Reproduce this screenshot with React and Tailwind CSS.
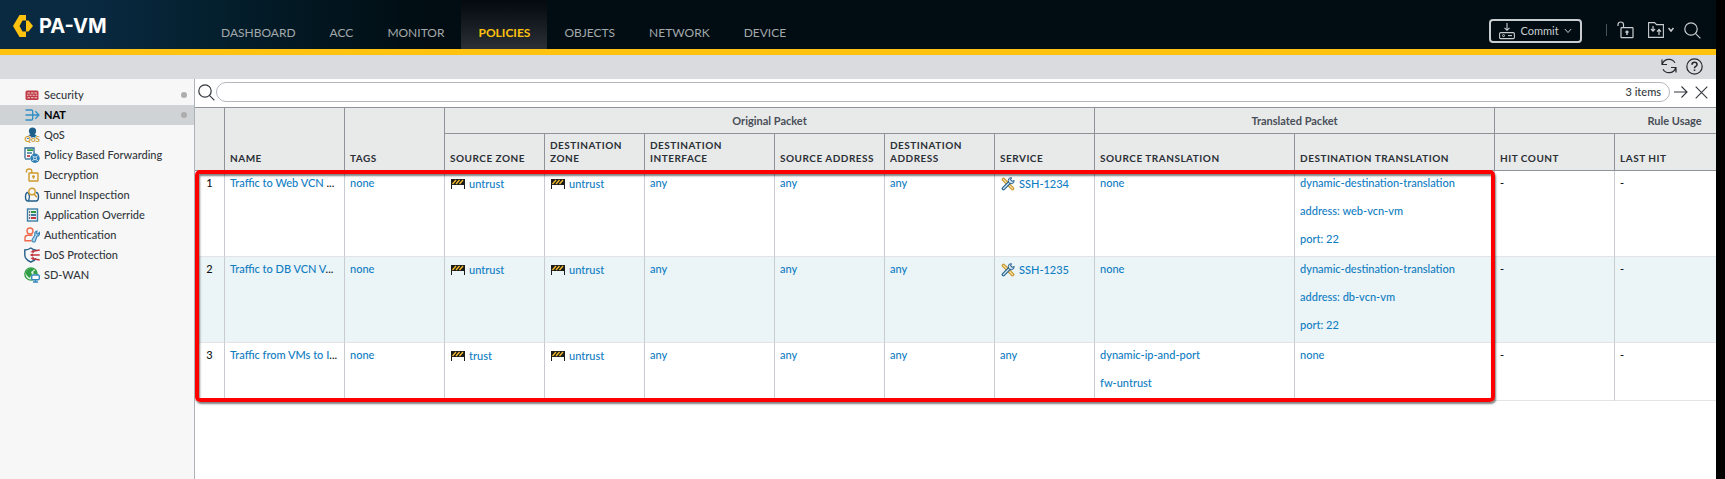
import React from "react";

const NAV = ["DASHBOARD", "ACC", "MONITOR", "POLICIES", "OBJECTS", "NETWORK", "DEVICE"];

function Svg({ w = 16, h = 16, className = "", children }) {
  return (
    <svg width={w} height={h} viewBox={`0 0 ${w} ${h}`} fill="none" className={`shrink-0 ${className}`} aria-hidden="true">
      {children}
    </svg>
  );
}

const SecurityIcon = () => (
  <Svg>
    <rect x="1.500" y="3.500" width="13" height="9.500" rx="1.500" fill="#bf3a44" />
    <path d="M3.500 6h2.500M7 6h2.500M10.500 6h2.500M3 8.300h1.500M5.500 8.300h2M8.700 8.300h2M11.800 8.300h1.500M3.500 10.700h2.500M7 10.700h2.500M10.500 10.700h2.500" stroke="#f3d6d8" strokeWidth="1.100" />
  </Svg>
);
const NatIcon = () => (
  <Svg>
    <path d="M1.500 3h6q1.200 0 1.200 1.200v7.600q0 1.200-1.200 1.200h-6M1.500 8h13M11.300 4.300 15 8l-3.700 3.700" stroke="#2f8fc4" strokeWidth="1.300" />
  </Svg>
);
const QosIcon = () => (
  <Svg>
    <circle cx="8.500" cy="4" r="3.600" fill="#1d5e8a" />
    <path d="M3 12c0-3.500 2-5 5.500-5s5 1.500 5 5z" fill="#1d5e8a" />
    <text x=".5" y="15" fontSize="8" fontWeight="700" fill="#c8992c" stroke="#f7f7f7" strokeWidth="1.500" paintOrder="stroke" fontFamily="Lato, sans-serif">QoS</text>
  </Svg>
);
const PbfIcon = () => (
  <Svg>
    <path d="M1 11.500V1h9v6" fill="#fff" stroke="#2a6a95" strokeWidth="1.300" />
    <path d="M1 12h5" stroke="#2a6a95" strokeWidth="1.300" />
    <path d="M3 3.200H9" stroke="#2d9a3c" strokeWidth="1.800" />
    <path d="M3 6H8" stroke="#2a6a95" strokeWidth="1.400" />
    <path d="M3 9h3" stroke="#c23b43" strokeWidth="1.800" />
    <circle cx="11" cy="11.300" r="4.700" fill="#2f7fb5" />
    <path d="m8.300 8.600 5.400 5.400m0-5.400-5.400 5.400" stroke="#e6f2f9" strokeWidth="1" />
    <circle cx="11" cy="11.300" r="1.500" fill="#2f7fb5" stroke="#e6f2f9" strokeWidth=".8" />
  </Svg>
);
const DecryptIcon = () => (
  <Svg>
    <rect x="5" y="6" width="9" height="8" rx=".5" stroke="#cf9a2b" strokeWidth="1.400" />
    <path d="M7.800 6V4q0-2-2.600-2T2.500 4v1.500" stroke="#cf9a2b" strokeWidth="1.400" />
    <path d="M9.500 8.200v3.600M8 9.500h3" stroke="#cf9a2b" strokeWidth="1.400" />
  </Svg>
);
const TunnelIcon = () => (
  <Svg>
    <path d="M4 5.500Q1.500 5.500 1.500 9.700T4 14h8q2.500 0 2.500-4.300T12 5.500" stroke="#245f8b" strokeWidth="1.400" />
    <path d="M4.500 5.800q1.800 4 0 8" stroke="#245f8b" strokeWidth="1.200" />
    <circle cx="8" cy="4.500" r="3.200" stroke="#cf9a2b" strokeWidth="1.400" />
    <path d="m10 7 2.800 3.200" stroke="#cf9a2b" strokeWidth="1.500" />
  </Svg>
);
const AppIcon = () => (
  <Svg>
    <rect x="3.500" y="2" width="10" height="12" fill="#e9f1f6" stroke="#3f7ea6" strokeWidth="1.400" />
    <path d="M7 5h5" stroke="#2d9a3c" strokeWidth="2" />
    <path d="M7 8h5" stroke="#2a6a95" strokeWidth="1.800" />
    <path d="M7 11h5" stroke="#c23b43" strokeWidth="2" />
    <path d="M5 5h1.200M5 8h1.200M5 11h1.200" stroke="#444" strokeWidth="1.500" />
  </Svg>
);
const AuthIcon = () => (
  <Svg>
    <circle cx="6" cy="4" r="3" stroke="#f0694a" strokeWidth="1.400" />
    <path d="M8.500 8.300H4Q1 8.300 1 11v2.700h6.500" stroke="#f0694a" strokeWidth="1.400" />
    <path d="M9.500 15c-1.500-.5-2-1.500-1-3l2.500-4c-.8-2 .5-3.700 2-4l-.4 2.200 1.200.7L15.500 5.500c.2 2-1 3.600-2.600 3.800L11.300 14c-.3.800-1 1.200-1.800 1z" fill="#b5d9ef" stroke="#3a86b8" strokeWidth="1.200" />
  </Svg>
);
const DosIcon = () => (
  <Svg>
    <path d="M12.500 3.200Q9.500 3 6.800 1 4 3 .8 3v5q0 4.500 6 7 4-1.500 5.300-3.500" stroke="#245f8b" strokeWidth="1.400" />
    <path d="M15.700 3 8 4.500M15.700 8H7M15.700 13 8 11.500" stroke="#c2343f" strokeWidth="1.300" />
    <path d="M9.500 2.700 6.500 4.900l3.500 1zM9 6.200 5.800 8 9 9.800zM9.500 13.300 6.500 11.100l3.500-1z" fill="#c2343f" />
  </Svg>
);
const SdwanIcon = () => (
  <Svg>
    <circle cx="7" cy="7" r="6.200" fill="#dff0df" stroke="#2f9e44" strokeWidth="1.300" />
    <path d="M1.500 5.500q2-4 6-4.500l2.500 1.800-3 2.200 1 2.500L5.500 11 2.500 8z" fill="#2f9e44" />
    <path d="m9.500 4 3-.5L13 7h-3.500z" fill="#2f9e44" />
    <rect x="7.700" y="8" width="7.600" height="4.800" rx="1.200" fill="#fff" stroke="#3587bd" strokeWidth="1.400" />
    <path d="M11.500 13v2M9 15h5" stroke="#3587bd" strokeWidth="1.400" />
  </Svg>
);

const SIDE = [
  ["Security", SecurityIcon, true],
  ["NAT", NatIcon, true],
  ["QoS", QosIcon],
  ["Policy Based Forwarding", PbfIcon],
  ["Decryption", DecryptIcon],
  ["Tunnel Inspection", TunnelIcon],
  ["Application Override", AppIcon],
  ["Authentication", AuthIcon],
  ["DoS Protection", DosIcon],
  ["SD-WAN", SdwanIcon],
];

const SearchIcon = () => (
  <Svg w={17} h={17}>
    <circle cx="7" cy="7" r="6.200" stroke="currentColor" strokeWidth="1.200" />
    <path d="m11.400 11.400 5 5" stroke="currentColor" strokeWidth="1.200" />
  </Svg>
);

const ZoneIcon = () => (
  <Svg w={14} h={10}>
    <rect x="0" y="0" width="14" height="6" fill="#1c1c1c" />
    <path d="M1.500 5 5 1M5 5l3.500-4M8.500 5 12 1" stroke="#f2b92a" strokeWidth="1.400" />
    <path d="M.5 5v5M13.500 5v5" stroke="#1c1c1c" strokeWidth="1" />
  </Svg>
);

const ServiceIcon = () => (
  <Svg w={14} h={14}>
    <path d="m2.500 2.500 9 9" stroke="#c9952b" strokeWidth="3.600" strokeLinecap="round" />
    <path d="m2.500 2.500 9 9" stroke="#f7e3a6" strokeWidth="1.300" strokeLinecap="round" />
    <path d="m2.500 11.500 7-7" stroke="#245f8b" strokeWidth="3.600" strokeLinecap="round" />
    <path d="m2.500 11.500 7-7" stroke="#d5e8f4" strokeWidth="1.300" strokeLinecap="round" />
    <path d="M13.200 3.500a3 3 0 1 1-2.700-2.800L9.500 3l1.500 1.300z" fill="#d5e8f4" stroke="#245f8b" strokeWidth="1" />
  </Svg>
);

const COLS = [
  ["Source Zone"],
  ["Destination", "Zone"],
  ["Destination", "Interface"],
  ["Source Address"],
  ["Destination", "Address"],
  ["Service"],
  ["Source Translation"],
  ["Destination Translation"],
  ["Hit Count"],
  ["Last Hit"],
  [],
];

const ROWS = [
  { n: 1, name: "Traffic to Web VCN ", from: "untrust", service: "SSH-1234", src: ["none"], dst: ["dynamic-destination-translation", "address: web-vcn-vm", "port: 22"] },
  { n: 2, name: "Traffic to DB VCN V", from: "untrust", service: "SSH-1235", src: ["none"], dst: ["dynamic-destination-translation", "address: db-vcn-vm", "port: 22"] },
  { n: 3, name: "Traffic from VMs to I", from: "trust", service: null, src: ["dynamic-ip-and-port", "fw-untrust"], dst: ["none"] },
];

function Th({ children, className = "", ...rest }) {
  return (
    <th className={`border-r border-b border-[#8f9298] px-[5px] pb-[5px] text-left align-bottom text-[10px] leading-[13px] font-bold tracking-wider uppercase text-[#2b2f36] ${className}`} {...rest}>
      {children}
    </th>
  );
}

function Td({ children, className = "" }) {
  return <td className={`border-r border-b border-r-[#c8ccd0] border-b-[#e2e4e5] px-[5px] pt-[5px] pb-[10px] align-top ${className}`}>{children}</td>;
}

const Lnk = ({ children }) => <a href="#rule" className="text-[#0f7dc2]">{children}</a>;

const Lines = ({ items }) => (
  <div className="flex flex-col gap-[14px]">
    {items.map((t) => <Lnk key={t}>{t}</Lnk>)}
  </div>
);

const Zone = ({ name }) => (
  <div className="flex items-center gap-1 pt-px pl-px">
    <ZoneIcon />
    <Lnk>{name}</Lnk>
  </div>
);

export default function App() {
  return (
    <div className="flex h-screen flex-col bg-black pr-[9px] font-['Lato',sans-serif] text-[11px] leading-[14px] text-[#111]">
      <header className="flex h-[55px] shrink-0 items-stretch border-b-[6px] border-[#ffc20e] bg-linear-to-r from-[#0a2a42] from-5% via-[#04202f] via-12% to-[#010d12] to-25%">
        <div className="flex w-[204px] shrink-0 items-center gap-[6px] pt-[2px] pl-[13px]">
          <Svg w={20} h={22}>
            <path d="M6.500 0H13v5.500H9.500L6.500 11l3 5.500H13V22H6.500L0 11z" fill="#ffc20e" />
            <path d="M13 5.500h2.500L20 11l-4.500 5.500H13z" fill="#ffc20e" />
          </Svg>
          <span className="font-['Inter',sans-serif] text-[20px] leading-6 font-bold text-white">PA-VM</span>
        </div>
        <nav className="flex text-[12px] leading-4 text-[#a3a8ab]">
          {NAV.map((n) => (
            <a key={n} href="#nav" className={n === "POLICIES" ? "flex items-end bg-linear-to-b from-[#04090e] to-[#2b3037] px-[17px] pb-2 font-bold text-[#ffc20e]" : "flex items-end px-[17px] pb-2"}>
              {n}
            </a>
          ))}
        </nav>
        <div className="ml-auto flex items-start pt-[19px] pr-[15px] text-[#c9cdd0]">
          <button type="button" className="flex h-6 w-[93px] items-center justify-center gap-[5px] rounded border-2 border-[#c9cdd0]">
            <Svg w={16} h={17}>
              <path d="M8 0v7M5.500 4.800 8 7.300l2.500-2.500" stroke="currentColor" strokeWidth="1.100" />
              <rect x=".6" y="9.600" width="14.800" height="6" rx="1.200" stroke="currentColor" strokeWidth="1.100" />
              <circle cx="4.500" cy="12.600" r="1" stroke="currentColor" strokeWidth="1" />
              <path d="M9 12.600h4" stroke="currentColor" strokeWidth="1.100" />
            </Svg>
            Commit
            <Svg w={8} h={6}><path d="m.8 1 3.200 3.500L7.200 1" stroke="currentColor" /></Svg>
          </button>
          <div className="ml-6 flex items-center gap-[10px] pt-[2px]">
            <span className="h-3 w-px bg-[#4a5358]" />
            <button type="button" aria-label="Locks">
              <Svg w={17} h={18}>
                <rect x="4" y="6.600" width="12" height="10" rx=".6" stroke="currentColor" strokeWidth="1.200" />
                <path d="M6.500 6.500V3.500Q6.500 1 3.800 1T1 3.500V5" stroke="currentColor" strokeWidth="1.200" />
                <path d="M10 9.500v4.500M8.300 11h3.400" stroke="currentColor" strokeWidth="1.500" />
              </Svg>
            </button>
            <button type="button" aria-label="Configuration" className="ml-1 flex items-center gap-1">
              <Svg w={16} h={16}>
                <path d="M.6 15.400V.6h6l2 2h6.800v12.800z" stroke="currentColor" strokeWidth="1.100" />
                <path d="M5 4v5M3 7l2 2.200L7 7M11 13V7.500M9 9.700l2-2.200 2 2.200" stroke="currentColor" strokeWidth="1.200" />
              </Svg>
              <Svg w={6} h={6}><path d="m.5 1 2.500 3 2.500-3" stroke="currentColor" strokeWidth="1.500" /></Svg>
            </button>
            <button type="button" aria-label="Search"><SearchIcon /></button>
          </div>
        </div>
      </header>

      <div className="flex h-6 shrink-0 items-center justify-end gap-[9px] bg-[#dadbdf] pr-[13px] pb-[2px] text-[#25292e]">
        <button type="button" aria-label="Refresh">
          <Svg w={16} h={16}>
            <path d="M1.200 6.500A7 7 0 0 1 14 4.800M14.800 9.500A7 7 0 0 1 2 11.200M1 1.500v5h5M15 14.500v-5h-5" stroke="currentColor" strokeWidth="1.200" />
          </Svg>
        </button>
        <button type="button" aria-label="Help">
          <Svg w={17} h={17}>
            <circle cx="8.500" cy="8.500" r="7.700" stroke="currentColor" strokeWidth="1.200" />
            <path d="M6 6.700q0-2.400 2.500-2.400T11 6.500q0 1.200-1.300 1.900-1.200.7-1.200 1.900M8.500 11.500v1.600" stroke="currentColor" strokeWidth="1.600" />
          </Svg>
        </button>
      </div>

      <div className="flex min-h-0 flex-1 bg-white font-medium">
        <aside className="w-[195px] shrink-0 border-r border-[#b0b2ba] bg-[#f7f7f7] pt-[6px]">
          <ul>
            {SIDE.map(([label, Icon, dot]) => (
              <li key={label}>
                <a href="#policy" className={label === "NAT" ? "flex h-5 items-center gap-1 bg-[#d0d3d6] pr-[7px] pl-6 font-bold text-black" : "flex h-5 items-center gap-1 pr-[7px] pl-6 text-[#33373d]"}>
                  <Icon />
                  <span>{label}</span>
                  {dot && <span className="ml-auto size-[6px] rounded-full bg-[#adadad]" />}
                </a>
              </li>
            ))}
          </ul>
        </aside>

        <main className="min-w-0 flex-1 overflow-hidden">
          <div className="flex h-7 items-center pr-2 pb-[2px] pl-[3px] text-[#33373d]">
            <SearchIcon />
            <label className="ml-px flex h-5 flex-1 items-center rounded-full border border-[#b5b7bd] pr-2 pl-3">
              <input aria-label="Filter rules" className="min-w-0 flex-1 outline-none" />
              <span>3 items</span>
            </label>
            <button type="button" aria-label="Apply filter" className="ml-1">
              <Svg w={14} h={14}><path d="M0 7h13M7.500 1.500 13 7l-5.500 5.500" stroke="currentColor" strokeWidth="1.100" /></Svg>
            </button>
            <button type="button" aria-label="Clear filter" className="ml-[7px]">
              <Svg w={13} h={13}><path d="m.7.7 11.600 11.600M12.300.7.700 12.300" stroke="currentColor" strokeWidth="1.100" /></Svg>
            </button>
          </div>

          <div className="relative w-[1660px]">
            <table className="w-full table-fixed border-separate border-spacing-0">
              <colgroup>
                <col className="w-[30px]" />
                <col className="w-[120px]" />
                <col className="w-[100px]" />
                <col className="w-[100px]" />
                <col className="w-[100px]" />
                <col className="w-[130px]" />
                <col className="w-[110px]" />
                <col className="w-[110px]" />
                <col className="w-[100px]" />
                <col className="w-[200px]" />
                <col className="w-[200px]" />
                <col className="w-[120px]" />
                <col className="w-[120px]" />
                <col className="w-[120px]" />
              </colgroup>
              <thead className="bg-[#e8eae9]">
                <tr className="h-[27px] text-[#484e58]">
                  <Th rowSpan={2} className="border-t" />
                  <Th rowSpan={2} className="border-t">Name</Th>
                  <Th rowSpan={2} className="border-t">Tags</Th>
                  <th colSpan={6} className="border-t border-r border-b border-[#8f9298] font-bold">Original Packet</th>
                  <th colSpan={2} className="border-t border-r border-b border-[#8f9298] font-bold">Translated Packet</th>
                  <th colSpan={3} className="border-t border-r border-b border-[#8f9298] font-bold">Rule Usage</th>
                </tr>
                <tr className="h-[37px]">
                  {COLS.map((c, i) => (
                    <Th key={i}>{c.map((l) => <span key={l} className="block whitespace-nowrap">{l}</span>)}</Th>
                  ))}
                </tr>
              </thead>
              <tbody>
                {ROWS.map((r) => (
                  <tr key={r.n} className={r.n === 2 ? "bg-[#ebf4f7]" : "bg-white"}>
                    <Td className="text-center">{r.n}</Td>
                    <Td className="whitespace-nowrap"><Lnk>{r.name}</Lnk>...</Td>
                    <Td><Lnk>none</Lnk></Td>
                    <Td><Zone name={r.from} /></Td>
                    <Td><Zone name="untrust" /></Td>
                    <Td><Lnk>any</Lnk></Td>
                    <Td><Lnk>any</Lnk></Td>
                    <Td><Lnk>any</Lnk></Td>
                    <Td>
                      {r.service ? (
                        <div className="flex items-center gap-1 pt-px pl-px"><ServiceIcon /><Lnk>{r.service}</Lnk></div>
                      ) : (
                        <Lnk>any</Lnk>
                      )}
                    </Td>
                    <Td><Lines items={r.src} /></Td>
                    <Td><Lines items={r.dst} /></Td>
                    <Td>-</Td>
                    <Td>-</Td>
                    <Td />
                  </tr>
                ))}
              </tbody>
            </table>
            <div className="pointer-events-none absolute top-[63px] -bottom-px left-0 w-[1300px] rounded-[5px] border-4 border-[#ff0000] shadow-[1px_2px_2px_rgba(0,0,0,0.5),inset_1px_2px_2px_rgba(0,0,0,0.5)]" />
          </div>
        </main>
      </div>
    </div>
  );
}
